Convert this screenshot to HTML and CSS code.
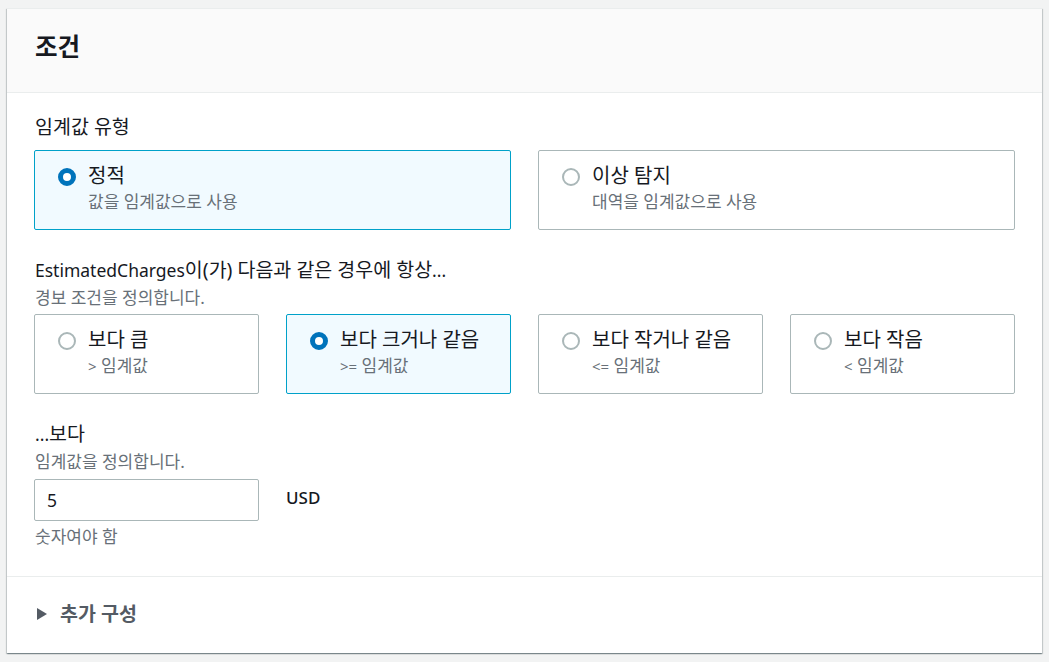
FILE: index.html
```html
<!DOCTYPE html>
<html lang="ko">
<head>
<meta charset="utf-8">
<title>조건</title>
<link rel="stylesheet" href="styles.css">
</head>
<body>
<div class="card">
  <div class="card-header"><h2 class="card-title">조건</h2></div>
  <div class="card-body">
    <div class="field-label">임계값 유형</div>
    <div class="tiles tiles-2">
      <div class="tile selected">
        <span class="radio checked"></span>
        <div class="tile-text"><div class="tile-title">정적</div><div class="tile-desc">값을 임계값으로 사용</div></div>
      </div>
      <div class="tile">
        <span class="radio"></span>
        <div class="tile-text"><div class="tile-title">이상 탐지</div><div class="tile-desc">대역을 임계값으로 사용</div></div>
      </div>
    </div>

    <div class="field-label gap-top"><span class="latin">EstimatedCharges</span>이(가) 다음과 같은 경우에 항상<span class="latin">...</span></div>
    <div class="field-desc">경보 조건을 정의합니다.</div>
    <div class="tiles tiles-4">
      <div class="tile">
        <span class="radio"></span>
        <div class="tile-text"><div class="tile-title">보다 큼</div><div class="tile-desc"><span class="latin-s">&gt;</span> 임계값</div></div>
      </div>
      <div class="tile selected">
        <span class="radio checked"></span>
        <div class="tile-text"><div class="tile-title">보다 크거나 같음</div><div class="tile-desc"><span class="latin-s">&gt;=</span> 임계값</div></div>
      </div>
      <div class="tile">
        <span class="radio"></span>
        <div class="tile-text"><div class="tile-title">보다 작거나 같음</div><div class="tile-desc"><span class="latin-s">&lt;=</span> 임계값</div></div>
      </div>
      <div class="tile">
        <span class="radio"></span>
        <div class="tile-text"><div class="tile-title">보다 작음</div><div class="tile-desc"><span class="latin-s">&lt;</span> 임계값</div></div>
      </div>
    </div>

    <div class="field-label gap-top"><span class="latin">...</span>보다</div>
    <div class="field-desc">임계값을 정의합니다.</div>
    <div class="input-row">
      <div class="input">5</div>
      <div class="unit">USD</div>
    </div>
    <div class="field-hint">숫자여야 함</div>
  </div>
  <div class="card-footer">
    <span class="caret"></span>
    <span class="expand-label">추가 구성</span>
  </div>
</div>
</body>
</html>
```

FILE: styles.css
```css
* { box-sizing: border-box; }
html, body { margin: 0; padding: 0; }
body {
  background: #f2f3f3;
  font-family: "Noto Sans", "Noto Sans CJK KR", sans-serif;
  color: #16191f;
  padding: 8px 7px 9px 7px;
}
.card {
  background: #ffffff;
  box-shadow: 0 1px 1px 0 rgba(0, 28, 36, 0.3), 1px 1px 1px 0 rgba(0, 28, 36, 0.15), -1px 1px 1px 0 rgba(0, 28, 36, 0.15);
  border-top: 1px solid #eaeded;
}
.card-header {
  background: #fafafa;
  border-bottom: 1px solid #eaeded;
  height: 84px;
  padding: 0 28px 8px 28px;
  display: flex;
  align-items: center;
}
.card-title {
  margin: 0;
  font-size: 24.5px;
  font-weight: 700;
  line-height: 30px;
}
.card-body {
  padding: 22px 27px 29px 27px;
  border-bottom: 1px solid #eaeded;
}
.latin { font-size: 17.5px; }
.latin-s { font-size: 15px; }
.field-label {
  font-size: 19.5px;
  line-height: 24px;
  padding-left: 1px;
}
.field-label.gap-top { margin-top: 28px; }
.field-desc {
  font-size: 17px;
  line-height: 26px;
  color: #687078;
  margin-top: 3px;
  padding-left: 1px;
}
.field-hint {
  font-size: 17px;
  line-height: 20px;
  color: #687078;
  margin-top: 6px;
  padding-left: 1px;
}
.tiles {
  display: grid;
  gap: 27px;
}
.tiles-2 { grid-template-columns: 1fr 1fr; margin-top: 11px; }
.tiles-4 { grid-template-columns: 1fr 1fr 1fr 1fr; margin-top: 3px; }
.tile {
  height: 80px;
  border: 1px solid #aab7b8;
  border-radius: 2px;
  display: flex;
  align-items: flex-start;
  padding: 12px 16px 0 23px;
  background: #ffffff;
}
.tile.selected {
  border-color: #00a1c9;
  background: #f1faff;
}
.radio {
  flex: none;
  width: 18px;
  height: 18px;
  border-radius: 50%;
  border: 2px solid #aab7b8;
  background: #ffffff;
  margin-top: 5px;
  margin-right: 12px;
}
.radio.checked {
  border: 5px solid #0073bb;
  background: #ffffff;
}
.tile-title {
  font-size: 20px;
  line-height: 26px;
  white-space: nowrap;
}
.tile-desc {
  font-size: 17px;
  line-height: 22px;
  color: #687078;
  margin-top: 2px;
}
.input-row {
  display: flex;
  align-items: center;
  gap: 27px;
  margin-top: 4px;
}
.input {
  width: 225px;
  height: 42px;
  border: 1px solid #aab7b8;
  border-radius: 2px;
  font-size: 17.5px;
  line-height: 40px;
  padding-left: 12px;
  background: #ffffff;
}
.unit {
  font-size: 17px;
  font-weight: 500;
  line-height: 24px;
  margin-top: -4px;
}
.card-footer {
  height: 76px;
  padding: 0 30px 3px 30px;
  display: flex;
  align-items: center;
  gap: 13px;
}
.caret {
  width: 0;
  height: 0;
  border-top: 6px solid transparent;
  border-bottom: 6px solid transparent;
  border-left: 10px solid #545b64;
  margin-top: 1px;
}
.expand-label {
  font-size: 19.5px;
  font-weight: 700;
  color: #545b64;
  line-height: 24px;
}
```
